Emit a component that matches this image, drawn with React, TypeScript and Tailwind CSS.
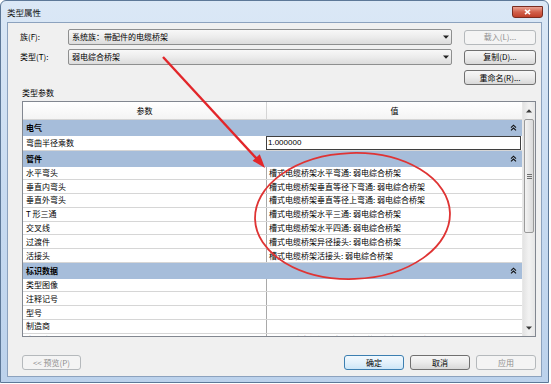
import React from 'react';

function Chevrons() {
  return (
    <svg width="7" height="7" viewBox="0 0 7 7" className="block">
      <path d="M1 3.6 L3.5 1.2 L6 3.6 M1 6.4 L3.5 4 L6 6.4" fill="none" stroke="#111" strokeWidth="1.1" />
    </svg>
  );
}

function DownTri({ color = '#000' }: { color?: string }) {
  return (
    <svg width="6" height="4" viewBox="0 0 6 4" className="block">
      <path d="M0 0.5 H6 L3 3.7 Z" fill={color} />
    </svg>
  );
}

function UpTri({ color = '#000' }: { color?: string }) {
  return (
    <svg width="6" height="4" viewBox="0 0 6 4" className="block">
      <path d="M0 3.5 H6 L3 0.3 Z" fill={color} />
    </svg>
  );
}

function Combo({ text }: { text: string }) {
  return (
    <div className="w-[384px] h-[16px] border border-[#8e8f8f] rounded-[2px] bg-gradient-to-b from-[#f8f8f8] via-[#ececec] to-[#dcdcdc] flex items-center pl-[3px] pr-[2px]">
      <span className="flex-1 leading-none">{text}</span>
      <DownTri color="#222" />
    </div>
  );
}

type Row = { p: string; v?: string; edit?: boolean };
type Group = { name: string; rows: Row[] };

const groups: Group[] = [
  { name: '电气', rows: [{ p: '弯曲半径乘数', v: '1.000000', edit: true }] },
  {
    name: '管件',
    rows: [
      { p: '水平弯头', v: '槽式电缆桥架水平弯通: 弱电综合桥架' },
      { p: '垂直内弯头', v: '槽式电缆桥架垂直等径下弯通: 弱电综合桥架' },
      { p: '垂直外弯头', v: '槽式电缆桥架垂直等径上弯通: 弱电综合桥架' },
      { p: 'T 形三通', v: '槽式电缆桥架水平三通: 弱电综合桥架' },
      { p: '交叉线', v: '槽式电缆桥架水平四通: 弱电综合桥架' },
      { p: '过渡件', v: '槽式电缆桥架异径接头: 弱电综合桥架' },
      { p: '活接头', v: '槽式电缆桥架活接头: 弱电综合桥架' },
    ],
  },
  {
    name: '标识数据',
    rows: [
      { p: '类型图像' },
      { p: '注释记号' },
      { p: '型号' },
      { p: '制造商' },
      { p: '类型注释', v: '带配件的电缆桥架类型注释说明文字示例内容' },
    ],
  },
];

const btnBase = 'h-[15px] rounded-[3px] border flex items-center justify-center leading-none';
const btnOn = 'border-[#707070] bg-gradient-to-b from-[#f7f7f7] via-[#ebebeb] to-[#d8d8d8] text-black';
const btnOff = 'border-[#b5b9bc] bg-[#f4f4f4] text-[#8e8e8e]';

export default function App() {
  return (
    <div className="w-[551px] h-[384px] bg-white relative overflow-hidden text-[8px] text-black font-['Noto_Sans_CJK_SC','Noto_Sans',sans-serif]">
      <div className="w-[549px] h-[383px] flex flex-col rounded-t-[6px] border border-[#5d7898] bg-gradient-to-b from-[#dbe8f6] via-[#c8dbf1] to-[#bcd2ec] relative">
        {/* title bar */}
        <div className="h-[21px] flex items-center pl-[6px] pt-[2px] text-[8.5px] leading-none text-[#111]">类型属性</div>
        <div className="absolute top-[5px] right-[5px] w-[31px] h-[12px] rounded-b-[3px] border border-[#7a2c20] bg-gradient-to-b from-[#e8a293] via-[#d2604b] to-[#c0402a] flex items-center justify-center">
          <svg width="7" height="6" viewBox="0 0 7 6">
            <path d="M1 0.8 L6 5.2 M6 0.8 L1 5.2" stroke="#fff" strokeWidth="1.6" />
          </svg>
        </div>

        <div className="flex-1 flex pl-[6px] pr-[6px] pb-[5px]">
          <div className="flex-1 border border-[#8ca2be] bg-[#f0f0f0] flex flex-col">
            {/* family row */}
            <div className="flex items-center h-[16px] mt-[6px] pl-[12px]">
              <div className="w-[48px] leading-none">族(F):</div>
              <Combo text="系统族：带配件的电缆桥架" />
              <div className={`ml-[12px] w-[72px] ${btnBase} ${btnOff}`}>载入(L)...</div>
            </div>
            {/* type row */}
            <div className="flex items-center h-[16px] mt-[4px] pl-[12px]">
              <div className="w-[48px] leading-none">类型(T):</div>
              <Combo text="弱电综合桥架" />
              <div className={`ml-[12px] w-[72px] ${btnBase} ${btnOn}`}>复制(D)...</div>
            </div>
            <div className="flex h-[15px] mt-[5px] pl-[456px]">
              <div className={`w-[72px] ${btnBase} ${btnOn}`}>重命名(R)...</div>
            </div>
            <div className="h-[10px] mt-[3px] pl-[14px] leading-[10px]">类型参数</div>

            {/* table */}
            <div className="ml-[14px] mt-[3px] w-[514px] h-[236px] border border-[#828790] bg-white flex overflow-hidden">
              <div className="w-[499px] flex flex-col">
                {/* header */}
                <div className="h-[18px] flex border-b border-[#d5d5d5] bg-gradient-to-b from-[#ffffff] to-[#f4f4f4] shrink-0">
                  <div className="w-[244px] border-r border-[#d5d5d5] flex items-center justify-center leading-none">参数</div>
                  <div className="flex-1 flex items-center justify-center leading-none">值</div>
                </div>
                {groups.map((g) => (
                  <React.Fragment key={g.name}>
                    <div className="h-[15.5px] shrink-0 bg-[#a6bdda] flex items-center justify-between pl-[3px] pr-[5px] font-bold leading-none">
                      <span>{g.name}</span>
                      <Chevrons />
                    </div>
                    {g.rows.map((r) => (
                      <div
                        key={r.p}
                        className={`${r.edit ? 'h-[15.5px]' : 'h-[13.8px]'} shrink-0 flex border-b border-[#d6d6d6]`}
                      >
                        <div className="w-[244px] border-r border-[#a9a9a9] flex items-center pl-[3px] leading-none">{r.p}</div>
                        <div className="flex-1 flex items-center leading-none">
                          {r.edit ? (
                            <div className="-ml-[1px] w-[255px] h-[14px] border border-[#3f3f3f] bg-white flex items-center pl-[1px] font-['Liberation_Sans',sans-serif]">
                              {r.v}
                            </div>
                          ) : (
                            <span className="pl-[2px]">{r.v}</span>
                          )}
                        </div>
                      </div>
                    ))}
                  </React.Fragment>
                ))}
              </div>
              {/* scrollbar */}
              <div className="flex-1 flex flex-col bg-gradient-to-r from-[#e3e3e3] via-[#f2f2f2] to-[#e6e6e6] border-l border-[#e8e8e8]">
                <div className="h-[17px] flex items-center justify-center shrink-0">
                  <UpTri color="#3a3a3a" />
                </div>
                <div className="flex-1 flex flex-col">
                  <div className="mx-[1px] h-[114px] rounded-[2px] border border-[#9a9a9a] bg-gradient-to-r from-[#f3f3f3] to-[#dadada] flex items-center justify-center">
                    <div className="flex flex-col gap-[1px]">
                      <div className="w-[5px] h-[1px] bg-[#6f6f6f]" />
                      <div className="w-[5px] h-[1px] bg-[#6f6f6f]" />
                      <div className="w-[5px] h-[1px] bg-[#6f6f6f]" />
                    </div>
                  </div>
                </div>
                <div className="h-[17px] flex items-center justify-center shrink-0">
                  <DownTri color="#3a3a3a" />
                </div>
              </div>
            </div>

            {/* bottom buttons */}
            <div className="flex mt-[18px] pl-[14px] pr-[5px] justify-between">
              <div className={`w-[59px] ${btnBase} ${btnOff}`}>&lt;&lt; 预览(P)</div>
              <div className="flex gap-[6px]">
                <div className={`w-[60px] ${btnBase} border-[#3c7fb1] bg-gradient-to-b from-[#f2f9fe] via-[#e3f1fb] to-[#cde6f7] text-black`}>确定</div>
                <div className={`w-[60px] ${btnBase} ${btnOn}`}>取消</div>
                <div className={`w-[60px] ${btnBase} ${btnOff}`}>应用</div>
              </div>
            </div>
          </div>
        </div>
      </div>

      {/* red annotations */}
      <svg className="absolute inset-0 pointer-events-none" width="551" height="384" viewBox="0 0 551 384">
        <line x1="163" y1="57" x2="257" y2="159" stroke="#e2262a" strokeWidth="2.4" />
        <polygon points="265,168 252.6,160.8 259.8,154.2" fill="#e2262a" />
        <ellipse cx="352.5" cy="216" rx="97.5" ry="63" fill="none" stroke="#df3434" strokeWidth="1.8" transform="rotate(-2 352.5 216)" />
      </svg>
    </div>
  );
}
